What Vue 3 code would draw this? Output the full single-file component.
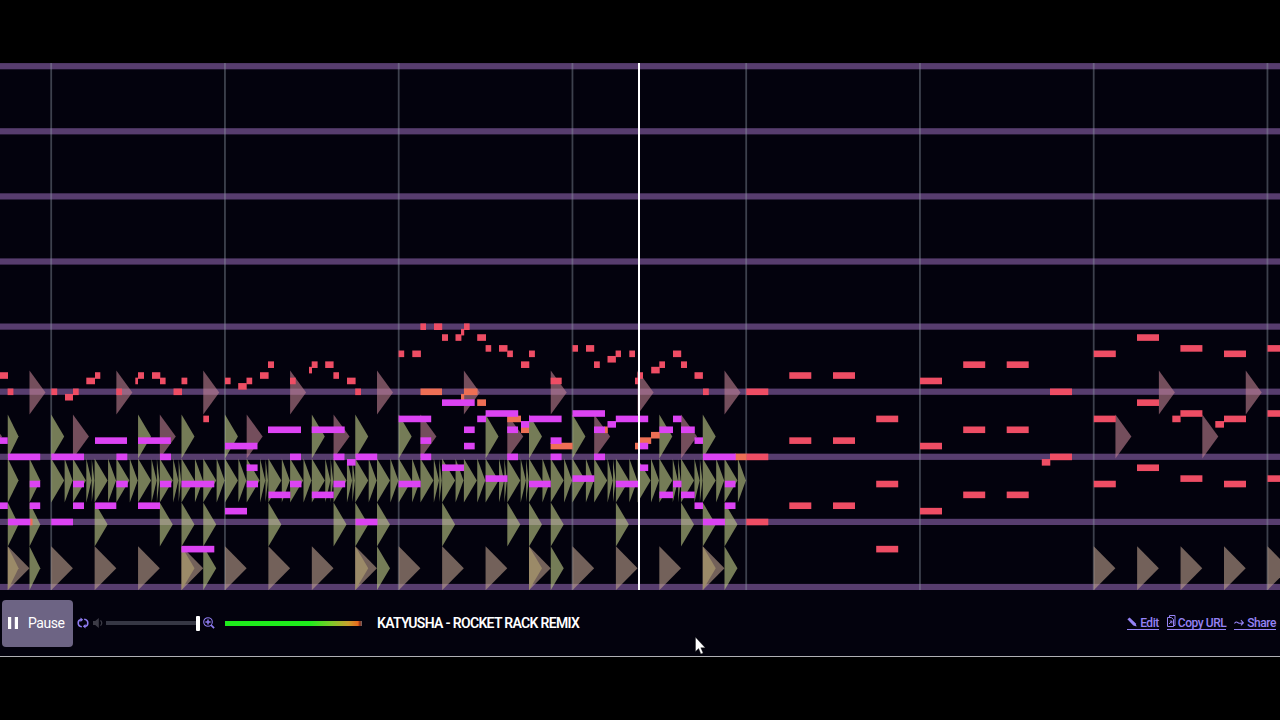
<template>
  <div class="page">
    <div class="player">
      <svg class="timeline" width="1280" height="527" viewBox="0 63 1280 527">
        <!-- octave lines -->
        <rect v-for="n in 9" :key="'o' + n" x="0" :y="rowY(n * 12 - 12) - 3.2" width="1280" height="6.2" fill="#573d6e" />
        <!-- bar lines -->
        <rect v-for="n in 8" :key="'b' + n" :x="barX(n - 1) - 0.9" y="63" width="1.8" height="527" fill="#8f98a8" opacity="0.42" />

        <path v-for="(h, i) in hits" :key="'h' + i" :d="hitPath(h)" :class="h.kind" />

        <g v-for="track in tracks" :key="track.name" :class="track.name">
          <rect
            v-for="(n, i) in track.notes"
            :key="i"
            :x="n[0]"
            :y="rowY(n[2]) - 3.3"
            :width="n[1] - n[0]"
            height="6.6"
          />
        </g>

        <rect x="638" y="63" width="2" height="527" fill="#fff" />
      </svg>

      <div class="controls">
        <button class="pause">
          <svg width="10" height="12" viewBox="0 0 10 12"><path d="M0 0h3.2v12H0zM6.800 0H10v12H6.800z" fill="#fff" /></svg>
          <span>Pause</span>
        </button>

        <svg class="loop" width="12" height="12" viewBox="0 0 12 12" fill="none" stroke="#8f7cf0" stroke-width="1.6">
          <path d="M4.800 9.800C2.600 9.500 1.200 8.100 1.200 6S2.300 2.700 4 2.700M7.200 2.200c2.200.3 3.600 1.700 3.600 3.800S9.700 9.300 8 9.300" />
          <path d="M3.500.500v4.400L6.200 2.700zM8.500 11.500V7.100L5.800 9.300z" fill="#8f7cf0" stroke="none" />
        </svg>

        <svg class="speaker" width="10" height="12" viewBox="0 0 10 12">
          <path d="M0 4h2.200L5.800 1v10L2.200 8H0z" fill="#3c3b46" />
          <path d="M7.500 3.300c1.400 1.500 1.400 3.900 0 5.400" fill="none" stroke="#3c3b46" stroke-width="1.200" />
        </svg>

        <div class="volume"><div class="thumb"></div></div>

        <svg class="zoom" width="12" height="12" viewBox="0 0 12 12" fill="none" stroke="#8f7cf0">
          <circle cx="5" cy="5" r="4.300" stroke-width="1.100" />
          <path d="M5 2.400v5.200M2.400 5h5.200" stroke-width="1.500" />
          <path d="M8.100 8.100l3 3" stroke-width="1.700" />
        </svg>

        <div class="meter"></div>

        <div class="title">KATYUSHA - ROCKET RACK REMIX</div>

        <div class="links">
          <a class="edit">
            <svg width="10" height="11" viewBox="0 0 10 11">
              <path d="M.4 2.200L2.600.4 8.600 6.200 9.600 9.400 6.300 8.400z" fill="#9583f5" />
            </svg>
            <span>Edit</span>
          </a>
          <a class="copy">
            <svg width="9" height="13" viewBox="0 0 9 13" fill="none" stroke="#9583f5">
              <path d="M2.500 2.500V.500h5.500v10H6.500M.500 2.500h3.800l2.200 2v7H.500z" />
              <path d="M2 9l2.800-2.600M2.800 6l2.200.2-.2 2.200" />
            </svg>
            <span>Copy URL</span>
          </a>
          <a class="share">
            <svg width="10" height="12" viewBox="0 0 10 12" fill="none" stroke="#9583f5" stroke-width="1.100">
              <path d="M.4 6.600C1.600 4.500 2.700 4.700 4 5.700s2.300.9 5 .2M6.900 3.200l2.500 2.600-2.500 2.600" />
            </svg>
            <span>Share</span>
          </a>
        </div>
      </div>
    </div>

    <svg class="cursor" width="11" height="18" viewBox="0 0 11 18">
      <path d="M.5.300v14.200l3.100-3 2.300 5.400 2.200-.9-2.300-5.300h4.400z" fill="#fff" stroke="#222" stroke-width=".4" />
    </svg>
  </div>
</template>

<script setup>
const BAR = 173.75
const BEAT = BAR / 8
const START = 51.2

const barX = (n) => START + n * BAR
// one semitone is 5.425px, row 0 is the lowest octave line
const rowY = (n) => 587.1 - n * 5.425

const hitPath = ({ x, y, w }) => `M${x} ${y}v44l${w} -22z`

// rows of the drum lanes
const Y = { crash: 370.5, clap: 414.5, hat: 458.5, snare: 502.5, kick: 546.2 }

const hits = []
const add = (kind, x, y, w) => hits.push({ kind, x, y, w })

// the end of the bar before the first line
add('rose', START - 3 * BEAT, Y.clap, 16)
add('brown', START - 2 * BEAT, Y.kick, 21.7)
add('tan', START - 2 * BEAT, Y.kick, 10.8)
add('green', START - 2 * BEAT, Y.clap, 10.8)
for (const b of [1, 2]) {
  add('green', START - b * BEAT, Y.hat, 10.8)
  add('green', START - b * BEAT, Y.snare, 10.8)
}
add('green', START - BEAT, Y.kick, 10.8)
add('rose', START - BEAT, Y.crash, 16)

for (let bar = 0; bar < 4; bar++) {
  for (let beat = 0; beat < 8; beat++) {
    const x = barX(bar) + beat * BEAT
    if (beat === 3 || beat === 7) add('rose', x, Y.crash, 16)
    if (beat === 1 || beat === 5) add('rose', x, Y.clap, 16)
    if ([0, 4, 6].includes(beat)) add('green', x, Y.clap, 13)

    add('green', x, Y.hat, 13)
    if ([1, 4, 5].includes(beat)) {
      add('green', x + 13.4, Y.hat, 5.2)
      add('green', x + 18.8, Y.hat, 2.6)
    } else {
      add('green', x + 13.4, Y.hat, 8)
    }

    if ([2, 5, 6, 7].includes(beat)) add('green', x, Y.snare, 13)
    if (beat % 2 === 0) add('brown', x, Y.kick, 21.7)
    if (beat === 6) add('tan', x, Y.kick, 13)
    if (beat === 7) add('green', x, Y.kick, 13)
  }
}

for (let i = 0; i < 5; i++) add('brown', barX(6) + i * 2 * BEAT, Y.kick, 21.7)
for (const b of [1, 5]) add('rose', barX(6) + b * BEAT, Y.clap, 16)
for (const b of [3, 7]) add('rose', barX(6) + b * BEAT, Y.crash, 16)

// [from, to, row]
const lead = [
  [0, 8, 39], [7.6, 13.4, 36], [51.3, 57.2, 36], [65, 73, 35], [73, 78.7, 36], [86.3, 95, 38], [95, 100.3, 39],
  [116.3, 122, 36], [135.3, 138, 38], [138, 144, 39], [152, 160.3, 39], [160, 165.6, 38], [173.5, 182, 36], [181.5, 187.3, 38],
  [203.3, 209, 31], [225, 230.6, 38], [238.2, 246.7, 37], [246.5, 252.2, 38], [260, 268.6, 39], [268, 274, 41],
  [290, 295.7, 38], [309, 312, 40], [311.7, 317.6, 41], [325.2, 333.6, 41], [333.4, 339, 39], [347, 355.6, 38],
  [355.2, 361, 36], [398.6, 404.2, 43], [412.3, 420.9, 43], [420.4, 426, 48], [434, 442.2, 48], [442, 448, 46],
  [455.5, 461.4, 46], [461, 464.2, 47], [464, 469.6, 48], [477.2, 486, 46], [485.6, 491.2, 44],
  [499, 507.5, 44], [507.2, 512.9, 43], [521, 529.3, 41], [529, 534.9, 43], [550.6, 561.7, 38],
  [572.5, 578, 44], [586, 594.2, 44], [594, 599.8, 41], [607.5, 615.9, 42], [615.6, 621, 43], [629.3, 635, 43],
  [635, 638, 38], [637.5, 643, 39], [651.2, 659.7, 40], [659.3, 665, 41], [673, 681.2, 43], [681, 687, 41],
  [694.5, 702.9, 39], [703, 708.8, 36], [1041.8, 1050.3, 23], [1172.3, 1180.6, 31], [1215.3, 1224, 30]
]

// long notes stacked in octaves
const chords = [
  [746.3, [36, 24, 12]],
  [789.3, [39, 27, 15]],
  [833, [39, 27, 15]],
  [876.2, [31, 19, 7]],
  [920, [38, 26, 14]],
  [963.2, [41, 29, 17]],
  [1006.7, [41, 29, 17]],
  [1050, [36, 24]],
  [1093.8, [43, 31, 19]],
  [1137, [46, 34, 22]],
  [1180.4, [44, 32, 20]],
  [1224, [43, 31, 19]],
  [1267.5, [44, 32, 20]]
]
chords.forEach(([x, rows]) => rows.forEach((r) => lead.push([x, x + 22, r])))

const harmony = [
  [30, 32.5, 12], [420.5, 442, 36], [461, 464.2, 35], [464, 477.5, 36], [477.2, 486, 34], [507.2, 521, 31],
  [521, 529, 29], [550.6, 572.6, 26], [604.5, 607.8, 29], [635, 638.2, 26], [638, 651.2, 27], [651, 659.8, 28], [735, 746.5, 24]
]

const bass = [
  [0, 7.7, 27], [8, 40.2, 24], [51.3, 84, 24], [95, 127, 27], [116.4, 127.3, 24], [138, 170.8, 27], [160, 171, 24],
  [29.7, 40.2, 19], [73, 84, 19], [116.3, 127.8, 19], [160, 171.3, 19], [181.5, 214.3, 19], [0, 7.8, 15], [29.7, 40.2, 15],
  [73, 84, 15], [95, 116.3, 15], [138, 160, 15], [8, 30.3, 12], [51.3, 73, 12], [181.5, 214.3, 7],
  [225, 257.5, 26], [268, 301, 29], [311.7, 344.7, 29], [290, 301, 24], [333.5, 344.5, 24], [355.5, 377.2, 24],
  [347, 355.6, 23], [398.6, 431.2, 31], [420.5, 431.2, 27], [420.5, 431.2, 24], [246.7, 257.6, 22],
  [246.7, 258, 19], [290, 301.5, 19], [333.5, 345.2, 19], [268.5, 290.4, 17], [311.8, 333.7, 17],
  [225, 247, 14], [355.5, 377.5, 12], [398.6, 420.7, 19],
  [442, 474.7, 34], [477.2, 486, 31], [464, 474.7, 29], [464, 474.7, 26], [485.6, 518.2, 32], [507.2, 518, 29],
  [507.2, 518, 24], [521, 529.2, 30], [529, 561.6, 31], [550.6, 561.6, 27], [550.6, 561.6, 24],
  [572.5, 605, 32], [594, 605, 29], [594, 605, 24], [607.5, 616, 30], [615.8, 648.2, 31],
  [442, 464, 22], [485.6, 507.5, 20], [529, 550.8, 19], [572.5, 594.4, 20], [615.8, 638, 19],
  [638, 648.2, 26], [659.4, 673, 29], [673, 681.5, 31], [681, 694.8, 29], [694.5, 703, 27], [703, 735.7, 24],
  [638, 648.2, 22], [659.4, 673, 17], [673, 681.5, 19], [681, 694.7, 17], [694.5, 703, 15],
  [724.8, 735.5, 15], [724.8, 735.5, 19], [703, 725, 12]
]

const tracks = [
  { name: 'lead', notes: lead },
  { name: 'harmony', notes: harmony },
  { name: 'bass', notes: bass }
]
</script>

<style>
body {
  background: #000;
}
</style>

<style scoped>
.page {
  position: relative;
  box-sizing: border-box;
  width: 1280px;
  height: 720px;
  padding-top: 63px;
  overflow: hidden;
  background: #000;
  font-family: Roboto, 'Liberation Sans', sans-serif;
}

.player {
  background: #03020d;
  border-bottom: 1px solid #b0b0b4;
}

.timeline {
  display: block;
}

.rose { fill: rgba(191, 130, 145, 0.6); }
.green { fill: rgba(194, 206, 137, 0.6); }
.brown { fill: rgba(190, 162, 141, 0.6); }
.tan { fill: rgba(160, 144, 106, 0.88); }

.lead { fill: #ee4d64; }
.harmony { fill: #ee6f55; }
.bass { fill: #dc43f3; }

.controls {
  display: flex;
  align-items: center;
  box-sizing: border-box;
  height: 66px;
  padding: 0 4px 0 2px;
}

.controls svg {
  flex: none;
  display: block;
}

.pause {
  display: flex;
  align-items: center;
  gap: 10px;
  box-sizing: border-box;
  width: 71px;
  height: 47px;
  padding: 0 0 0 6px;
  border: 0;
  border-radius: 4px;
  background: #6d6484;
  color: #fff;
  font: 400 14px Roboto, sans-serif;
  letter-spacing: -0.45px;
}

.loop { margin-left: 4px; }
.speaker { margin-left: 4px; }

.volume {
  display: flex;
  align-items: center;
  justify-content: flex-end;
  width: 94px;
  height: 4px;
  margin-left: 3px;
  background: #363744;
}

.thumb {
  flex: none;
  width: 4px;
  height: 15px;
  border-radius: 1px;
  background: #fff;
}

.zoom { margin-left: 3px; }

.meter {
  width: 137px;
  height: 5px;
  margin-left: 10px;
  background: linear-gradient(90deg, #1fec1c 0, #1fec1c 62%, #7fc828 78%, #c9a02c 90%, #e86a1c 97%, #8c2c18 98.5%, #77706c 100%);
}

.title {
  margin-left: 15px;
  color: #fff;
  font-size: 14px;
  font-weight: 600;
  letter-spacing: -0.68px;
  white-space: nowrap;
}

.links {
  display: flex;
  gap: 8px;
  margin-left: auto;
  color: #9583f5;
  font-size: 12px;
  font-weight: 500;
  letter-spacing: -0.45px;
  line-height: 12px;
}

.links a {
  display: flex;
  align-items: center;
  gap: 3px;
  height: 12px;
  border-bottom: 1px solid #9583f5;
  white-space: nowrap;
}

.links .copy { gap: 2px; }
.links .copy svg { margin-top: -3px; }

.links span {
  padding-top: 1px;
}

.cursor {
  position: absolute;
  left: 695px;
  top: 637px;
}
</style>
